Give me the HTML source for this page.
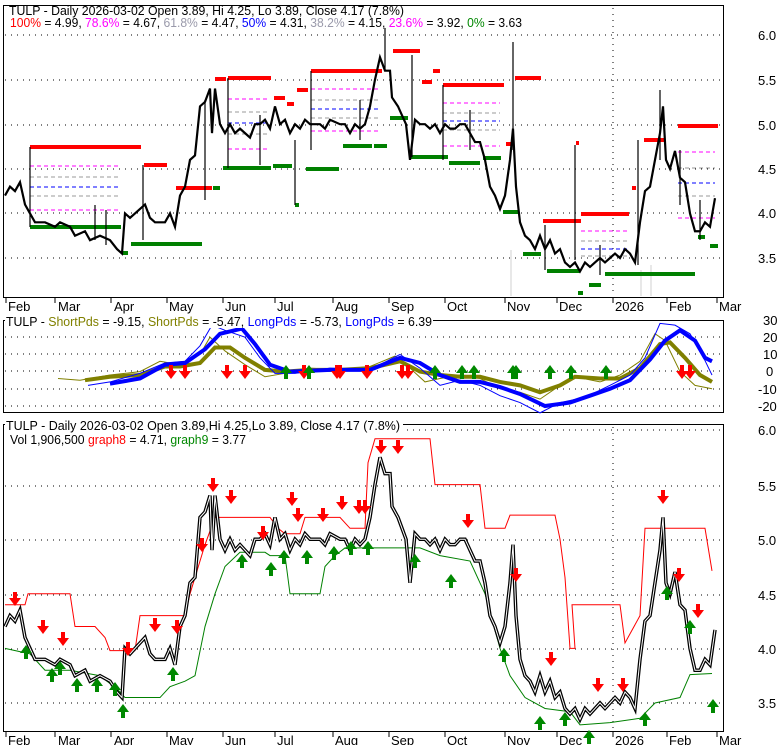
<!DOCTYPE html><html><head><style>
body{margin:0;background:#fff;width:780px;height:745px;overflow:hidden}
svg{display:block;font-family:"Liberation Sans",sans-serif}
.l{font-size:13px}
</style></head><body>
<svg width="780" height="745" viewBox="0 0 780 745">
<defs>
<polyline id="pr" fill="none" vector-effect="non-scaling-stroke" points="5,4.2 10,4.3 15,4.25 20,4.35 25,4.1 30,4.0 35,3.9 45,3.9 55,3.85 60,3.9 70,3.85 75,3.75 85,3.8 90,3.7 100,3.75 110,3.7 117,3.6 122,3.55 125,4.0 130,3.95 135,4.0 145,4.1 150,3.95 155,3.9 165,3.9 170,4.0 175,3.85 180,4.2 185,4.3 190,4.6 195,4.65 200,5.2 205,5.25 210,5.4 212,4.9 215,5.4 220,5.0 225,4.9 230,5.0 235,4.9 240,4.95 245,4.9 250,4.85 255,5.0 260,5.0 265,5.05 270,4.95 275,5.2 280,5.0 285,5.05 290,4.9 295,5.0 300,4.95 305,5.05 310,5.0 320,5.0 325,4.95 330,5.05 340,5.0 345,5.0 350,4.9 355,5.0 360,4.95 365,5.0 370,5.2 375,5.5 380,5.75 385,5.6 390,5.6 392,5.3 398,5.2 402,5.1 406,5.0 410,4.6 415,5.05 420,5.0 425,5.0 430,4.95 435,5.0 440,4.9 445,5.0 450,4.95 455,4.95 460,5.0 465,5.0 470,4.9 475,4.8 480,4.8 485,4.6 490,4.3 495,4.2 500,4.05 505,4.2 510,4.6 513,4.95 516,4.3 520,3.9 525,3.75 530,3.7 535,3.6 540,3.75 545,3.6 550,3.7 555,3.55 560,3.6 565,3.45 570,3.4 575,3.45 580,3.35 585,3.45 590,3.4 595,3.45 600,3.5 605,3.45 610,3.5 615,3.55 620,3.5 625,3.6 630,3.55 635,3.45 640,3.9 645,4.25 650,4.3 655,4.6 660,4.9 663,5.2 666,4.6 670,4.5 675,4.7 680,4.4 685,4.35 690,4.0 695,3.8 700,3.8 705,3.9 710,3.85 715,4.17"/>
</defs>

<!-- PANEL 1 -->
<rect x="3.5" y="5.5" width="720" height="292" fill="none" stroke="#000"/>
<g stroke="#000" stroke-dasharray="1,5">
<line x1="5" y1="35" x2="722" y2="35"/><line x1="5" y1="80" x2="722" y2="80"/><line x1="5" y1="125" x2="722" y2="125"/><line x1="5" y1="169" x2="722" y2="169"/><line x1="5" y1="213" x2="722" y2="213"/><line x1="5" y1="258" x2="722" y2="258"/>
<line x1="613" y1="8" x2="613" y2="296"/>
</g>
<g fill="#e8e8e8"><rect x="510" y="250" width="2" height="46"/><rect x="640" y="270" width="2" height="26"/><rect x="650" y="265" width="2" height="31"/></g>
<g stroke="#ff0000" stroke-width="4">
<line x1="30" y1="147" x2="141" y2="147"/><line x1="144" y1="165" x2="167" y2="165"/><line x1="176" y1="188" x2="212" y2="188"/><line x1="215" y1="79" x2="226" y2="79"/><line x1="228" y1="78" x2="271" y2="78"/><line x1="274" y1="98" x2="285" y2="98"/><line x1="287" y1="104" x2="294" y2="104"/><line x1="297" y1="90" x2="308" y2="90"/><line x1="311" y1="71" x2="382" y2="71"/><line x1="393" y1="51" x2="420" y2="51"/><line x1="422" y1="82" x2="432" y2="82"/><line x1="433" y1="71" x2="440" y2="71"/><line x1="443" y1="85" x2="504" y2="85"/><line x1="515" y1="78" x2="541" y2="78"/><line x1="543" y1="221" x2="581" y2="221"/><line x1="576" y1="143" x2="579" y2="143"/><line x1="581" y1="214" x2="629" y2="214"/><line x1="632" y1="188" x2="636" y2="188"/><line x1="644" y1="140" x2="664" y2="140"/><line x1="678" y1="126" x2="718" y2="126"/><line x1="506" y1="144" x2="511" y2="144"/>
</g>
<g stroke="#008000" stroke-width="4">
<line x1="30" y1="227" x2="121" y2="227"/><line x1="123" y1="253" x2="128" y2="253"/><line x1="131" y1="244" x2="202" y2="244"/><line x1="213" y1="188" x2="220" y2="188"/><line x1="223" y1="168" x2="271" y2="168"/><line x1="273" y1="166" x2="292" y2="166"/><line x1="295" y1="205" x2="299" y2="205"/><line x1="306" y1="169" x2="339" y2="169"/><line x1="343" y1="146" x2="372" y2="146"/><line x1="374" y1="146" x2="387" y2="146"/><line x1="390" y1="118" x2="408" y2="118"/><line x1="411" y1="157" x2="448" y2="157"/><line x1="449" y1="163" x2="480" y2="163"/><line x1="483" y1="158" x2="501" y2="158"/><line x1="503" y1="212" x2="518" y2="212"/><line x1="523" y1="254" x2="541" y2="254"/><line x1="547" y1="271" x2="580" y2="271"/><line x1="578" y1="293" x2="583" y2="293"/><line x1="589" y1="285" x2="601" y2="285"/><line x1="605" y1="274" x2="695" y2="274"/><line x1="698" y1="237" x2="705" y2="237"/><line x1="710" y1="246" x2="718" y2="246"/>
</g>
<g stroke-width="1" stroke-dasharray="4,3">
<line x1="30" y1="166" x2="120" y2="166" stroke="#f0f"/><line x1="30" y1="177" x2="120" y2="177" stroke="#999"/><line x1="30" y1="187" x2="120" y2="187" stroke="#00f"/><line x1="30" y1="196" x2="120" y2="196" stroke="#999"/><line x1="30" y1="210" x2="120" y2="210" stroke="#f0f"/>
<line x1="228" y1="99" x2="270" y2="99" stroke="#f0f"/><line x1="228" y1="112" x2="270" y2="112" stroke="#999"/><line x1="228" y1="123" x2="270" y2="123" stroke="#00f"/><line x1="228" y1="134" x2="270" y2="134" stroke="#999"/><line x1="228" y1="149" x2="270" y2="149" stroke="#f0f"/>
<line x1="311" y1="89" x2="380" y2="89" stroke="#f0f"/><line x1="311" y1="100" x2="380" y2="100" stroke="#999"/><line x1="311" y1="109" x2="380" y2="109" stroke="#00f"/><line x1="311" y1="118" x2="380" y2="118" stroke="#999"/><line x1="311" y1="131" x2="380" y2="131" stroke="#f0f"/>
<line x1="443" y1="103" x2="500" y2="103" stroke="#f0f"/><line x1="443" y1="113" x2="500" y2="113" stroke="#999"/><line x1="443" y1="121" x2="500" y2="121" stroke="#00f"/><line x1="443" y1="130" x2="500" y2="130" stroke="#999"/><line x1="443" y1="146" x2="500" y2="146" stroke="#f0f"/>
<line x1="581" y1="231" x2="628" y2="231" stroke="#f0f"/><line x1="581" y1="241" x2="628" y2="241" stroke="#999"/><line x1="581" y1="249" x2="628" y2="249" stroke="#00f"/><line x1="581" y1="256" x2="628" y2="256" stroke="#999"/>
<line x1="678" y1="152" x2="715" y2="152" stroke="#f0f"/><line x1="678" y1="168" x2="715" y2="168" stroke="#999"/><line x1="678" y1="183" x2="715" y2="183" stroke="#00f"/><line x1="678" y1="196" x2="715" y2="196" stroke="#999"/><line x1="678" y1="218" x2="715" y2="218" stroke="#f0f"/>
</g>
<use href="#pr" stroke="#000" stroke-width="2.2" transform="translate(0,35) scale(1,-89.2) translate(0,-6)"/>
<g stroke="#000" stroke-width="1.2">
<line x1="385" y1="28" x2="385" y2="70"/><line x1="513" y1="42" x2="513" y2="150"/><line x1="575" y1="145" x2="575" y2="260"/><line x1="295" y1="140" x2="295" y2="205"/><line x1="30" y1="147" x2="30" y2="227"/><line x1="143" y1="165" x2="143" y2="240"/><line x1="228" y1="78" x2="228" y2="168"/><line x1="311" y1="71" x2="311" y2="150"/><line x1="443" y1="85" x2="443" y2="160"/><line x1="412" y1="55" x2="412" y2="157"/><line x1="660" y1="90" x2="660" y2="160"/><line x1="638" y1="140" x2="638" y2="265"/><line x1="106" y1="210" x2="106" y2="245"/><line x1="95" y1="205" x2="95" y2="240"/><line x1="205" y1="100" x2="205" y2="200"/><line x1="260" y1="115" x2="260" y2="165"/><line x1="360" y1="100" x2="360" y2="140"/><line x1="470" y1="110" x2="470" y2="150"/><line x1="545" y1="225" x2="545" y2="270"/><line x1="600" y1="245" x2="600" y2="275"/><line x1="680" y1="150" x2="680" y2="205"/><line x1="700" y1="200" x2="700" y2="240"/></g>
<text x="9" y="15" class="l" fill="#000" textLength="395" lengthAdjust="spacingAndGlyphs">TULP - Daily 2026-03-02 Open 3.89, Hi 4.25, Lo 3.89, Close 4.17 (7.8%)</text>
<text x="10" y="27" class="l" textLength="512" lengthAdjust="spacingAndGlyphs"><tspan fill="#f00">100%</tspan> = 4.99, <tspan fill="#f0f">78.6%</tspan> = 4.67, <tspan fill="#99a">61.8%</tspan> = 4.47, <tspan fill="#00f">50%</tspan> = 4.31, <tspan fill="#99a">38.2%</tspan> = 4.15, <tspan fill="#f0f">23.6%</tspan> = 3.92, <tspan fill="#080">0%</tspan> = 3.63</text>
<g class="l" fill="#000"><text x="758" y="40">6.0</text><text x="758" y="85">5.5</text><text x="758" y="130">5.0</text><text x="758" y="174">4.5</text><text x="758" y="218">4.0</text><text x="758" y="263">3.5</text></g>
<g stroke="#000"><line x1="6" y1="298" x2="6" y2="303"/><line x1="55" y1="298" x2="55" y2="303"/><line x1="111" y1="298" x2="111" y2="303"/><line x1="167" y1="298" x2="167" y2="303"/><line x1="223" y1="298" x2="223" y2="303"/><line x1="275" y1="298" x2="275" y2="303"/><line x1="333" y1="298" x2="333" y2="303"/><line x1="389" y1="298" x2="389" y2="303"/><line x1="445" y1="298" x2="445" y2="303"/><line x1="505" y1="298" x2="505" y2="303"/><line x1="557" y1="298" x2="557" y2="303"/><line x1="613" y1="298" x2="613" y2="303"/><line x1="667" y1="298" x2="667" y2="303"/><line x1="717" y1="298" x2="717" y2="303"/></g>
<g class="l" fill="#000"><text x="8" y="311">Feb</text><text x="58" y="311">Mar</text><text x="114" y="311">Apr</text><text x="169" y="311">May</text><text x="225" y="311">Jun</text><text x="277" y="311">Jul</text><text x="335" y="311">Aug</text><text x="391" y="311">Sep</text><text x="447" y="311">Oct</text><text x="507" y="311">Nov</text><text x="559" y="311">Dec</text><text x="615" y="311">2026</text><text x="669" y="311">Feb</text><text x="719" y="311">Mar</text></g>

<!-- PANEL 2 -->
<rect x="3.5" y="320.5" width="720" height="92" fill="none" stroke="#000"/>
<g stroke="#000" stroke-dasharray="1,5">
<line x1="5" y1="337" x2="722" y2="337"/><line x1="5" y1="354" x2="722" y2="354"/><line x1="5" y1="371" x2="722" y2="371"/><line x1="5" y1="389" x2="722" y2="389"/><line x1="5" y1="406" x2="722" y2="406"/>
</g>
<g transform="translate(0,371.6) scale(1,-1.72)" fill="none">
<polyline vector-effect="non-scaling-stroke" stroke="#808000" stroke-width="1" points="58,-4 80,-5 110,-2 140,0 160,6 180,4 200,10 210,20 225,12 245,4 265,-3 285,-1 310,2 340,1 370,3 395,9 410,2 425,-6 440,-4 460,-2 480,-4 500,-10 520,-12 540,-16 555,-10 575,-3 600,-6 620,-2 640,6 655,22 665,18 680,0 695,-8 712,-10"/>
<polyline vector-effect="non-scaling-stroke" stroke="#808000" stroke-width="4" points="85,-5 110,-3 140,-2 165,3 180,3 200,5 215,14 230,14 245,8 265,1 285,0 310,1 340,1 370,2 400,6 420,0 440,-2 460,-3 480,-3 500,-6 520,-8 540,-12 560,-8 575,-3 600,-4 620,-4 640,2 660,16 670,17 685,8 700,-2 712,-6"/>
<polyline vector-effect="non-scaling-stroke" stroke="#0000ff" stroke-width="1" points="88,-8 110,-6 140,-1 165,5 185,6 200,15 212,27 225,24 245,20 260,8 275,-1 295,-1 330,2 370,1 400,10 420,2 440,-8 460,-5 480,-8 500,-14 520,-18 540,-24 560,-18 585,-15 610,-8 630,-2 645,8 660,28 675,27 690,22 702,10 712,-2"/>
<polyline vector-effect="non-scaling-stroke" stroke="#0000ff" stroke-width="4" points="110,-7 140,-4 165,4 185,5 205,13 220,22 242,25 255,16 270,4 290,0 330,1 370,1 400,8 420,5 440,-2 460,-6 480,-6 500,-9 520,-13 545,-20 570,-18 590,-14 610,-10 630,-5 650,7 665,18 680,24 695,18 705,8 712,6"/>
</g>
<g fill="#f00">
<path d="M169,365h4v6h4l-6,8l-6,-8h4z"/><path d="M183,365h4v6h4l-6,8l-6,-8h4z"/><path d="M225,365h4v6h4l-6,8l-6,-8h4z"/><path d="M243,365h4v6h4l-6,8l-6,-8h4z"/><path d="M335,365h4v6h4l-6,8l-6,-8h4z"/><path d="M338,365h4v6h4l-6,8l-6,-8h4z"/><path d="M365,365h4v6h4l-6,8l-6,-8h4z"/><path d="M400,365h4v6h4l-6,8l-6,-8h4z"/><path d="M406,365h4v6h4l-6,8l-6,-8h4z"/><path d="M302,365h4v6h4l-6,8l-6,-8h4z"/><path d="M680,365h4v6h4l-6,8l-6,-8h4z"/><path d="M688,365h4v6h4l-6,8l-6,-8h4z"/>
</g>
<g fill="#080">
<path d="M284,379h4v-6h4l-6,-8l-6,8h4z"/><path d="M307,379h4v-6h4l-6,-8l-6,8h4z"/><path d="M433,379h4v-6h4l-6,-8l-6,8h4z"/><path d="M460,379h4v-6h4l-6,-8l-6,8h4z"/><path d="M472,379h4v-6h4l-6,-8l-6,8h4z"/><path d="M511,379h4v-6h4l-6,-8l-6,8h4z"/><path d="M514,379h4v-6h4l-6,-8l-6,8h4z"/><path d="M548,379h4v-6h4l-6,-8l-6,8h4z"/><path d="M569,379h4v-6h4l-6,-8l-6,8h4z"/><path d="M604,379h4v-6h4l-6,-8l-6,8h4z"/>
</g>
<rect x="5" y="314" width="428" height="14" fill="#fff"/>
<text x="6" y="326" class="l" textLength="426" lengthAdjust="spacingAndGlyphs">TULP - <tspan fill="#808000">ShortPds</tspan> = -9.15, <tspan fill="#808000">ShortPds</tspan> = -5.47, <tspan fill="#00f">LongPds</tspan> = -5.73, <tspan fill="#00f">LongPds</tspan> = 6.39</text>
<g class="l" fill="#000"><text x="763" y="325">30</text><text x="763" y="342">20</text><text x="763" y="359">10</text><text x="766" y="376">0</text><text x="758" y="394">-10</text><text x="758" y="411">-20</text></g>

<!-- PANEL 3 -->
<rect x="3.5" y="424.5" width="720" height="307" fill="none" stroke="#000"/>
<g stroke="#000" stroke-dasharray="1,5">
<line x1="5" y1="430" x2="722" y2="430"/><line x1="5" y1="486" x2="722" y2="486"/><line x1="5" y1="540" x2="722" y2="540"/><line x1="5" y1="595" x2="722" y2="595"/><line x1="5" y1="649" x2="722" y2="649"/><line x1="5" y1="703" x2="722" y2="703"/>
<line x1="613" y1="427" x2="613" y2="730"/>
</g>
<g transform="translate(0,430) scale(1,-109.2) translate(0,-6)" fill="none">
<polyline vector-effect="non-scaling-stroke" stroke="#f00" stroke-width="1" points="5,4.4 25,4.4 28,4.5 70,4.5 75,4.2 95,4.2 105,4.1 110,3.98 135,3.98 140,4.3 185,4.3 190,4.5 205,4.95 215,5.2 270,5.2 278,5.1 285,5.05 300,5.05 305,5.2 340,5.2 350,5.1 365,5.1 368,5.7 375,5.92 430,5.92 435,5.5 480,5.5 485,5.1 505,5.1 510,5.22 555,5.22 560,5.0 565,4.65 570,4.0 575,4.0 572,4.4 620,4.4 625,4.05 640,4.3 645,5.1 705,5.1 712,4.71"/>
<polyline vector-effect="non-scaling-stroke" stroke="#008000" stroke-width="1" points="5,4.0 30,3.95 45,3.8 70,3.8 100,3.75 118,3.62 125,3.55 160,3.55 170,3.65 185,3.7 195,3.75 205,4.2 215,4.5 225,4.75 240,4.88 265,4.88 270,4.85 285,4.85 290,4.5 320,4.5 325,4.75 335,4.85 345,4.92 420,4.92 440,4.85 470,4.8 485,4.5 500,4.0 510,3.75 525,3.55 545,3.45 570,3.42 580,3.3 610,3.32 640,3.36 655,3.5 680,3.55 690,3.76 712,3.77"/>
</g>
<g transform="translate(0,430) scale(1,-109.2) translate(0,-6)">
<use href="#pr" stroke="#000" stroke-width="3.5"/>
<use href="#pr" stroke="#fff" stroke-width="1"/>
</g>
<g fill="#f00">
<path d="M13,592h4v6h4l-6,8l-6,-8h4z"/><path d="M41,620h4v6h4l-6,8l-6,-8h4z"/><path d="M61,632h4v6h4l-6,8l-6,-8h4z"/><path d="M126,642h4v6h4l-6,8l-6,-8h4z"/><path d="M153,618h4v6h4l-6,8l-6,-8h4z"/><path d="M175,620h4v6h4l-6,8l-6,-8h4z"/><path d="M200,538h4v6h4l-6,8l-6,-8h4z"/><path d="M211,478h4v6h4l-6,8l-6,-8h4z"/><path d="M229,490h4v6h4l-6,8l-6,-8h4z"/><path d="M261,526h4v6h4l-6,8l-6,-8h4z"/><path d="M290,492h4v6h4l-6,8l-6,-8h4z"/><path d="M296,508h4v6h4l-6,8l-6,-8h4z"/><path d="M321,508h4v6h4l-6,8l-6,-8h4z"/><path d="M340,496h4v6h4l-6,8l-6,-8h4z"/><path d="M357,500h4v6h4l-6,8l-6,-8h4z"/><path d="M363,500h4v6h4l-6,8l-6,-8h4z"/><path d="M379,440h4v6h4l-6,8l-6,-8h4z"/><path d="M396,440h4v6h4l-6,8l-6,-8h4z"/><path d="M466,514h4v6h4l-6,8l-6,-8h4z"/><path d="M514,568h4v6h4l-6,8l-6,-8h4z"/><path d="M549,652h4v6h4l-6,8l-6,-8h4z"/><path d="M596,678h4v6h4l-6,8l-6,-8h4z"/><path d="M621,678h4v6h4l-6,8l-6,-8h4z"/><path d="M661,490h4v6h4l-6,8l-6,-8h4z"/><path d="M677,568h4v6h4l-6,8l-6,-8h4z"/><path d="M696,604h4v6h4l-6,8l-6,-8h4z"/>
</g>
<g fill="#080">
<path d="M24,659h4v-6h4l-6,-8l-6,8h4z"/><path d="M50,682h4v-6h4l-6,-8l-6,8h4z"/><path d="M58,675h4v-6h4l-6,-8l-6,8h4z"/><path d="M75,692h4v-6h4l-6,-8l-6,8h4z"/><path d="M95,692h4v-6h4l-6,-8l-6,8h4z"/><path d="M113,696h4v-6h4l-6,-8l-6,8h4z"/><path d="M121,718h4v-6h4l-6,-8l-6,8h4z"/><path d="M171,681h4v-6h4l-6,-8l-6,8h4z"/><path d="M240,568h4v-6h4l-6,-8l-6,8h4z"/><path d="M269,576h4v-6h4l-6,-8l-6,8h4z"/><path d="M282,564h4v-6h4l-6,-8l-6,8h4z"/><path d="M305,564h4v-6h4l-6,-8l-6,8h4z"/><path d="M332,560h4v-6h4l-6,-8l-6,8h4z"/><path d="M349,555h4v-6h4l-6,-8l-6,8h4z"/><path d="M366,555h4v-6h4l-6,-8l-6,8h4z"/><path d="M413,568h4v-6h4l-6,-8l-6,8h4z"/><path d="M449,588h4v-6h4l-6,-8l-6,8h4z"/><path d="M502,662h4v-6h4l-6,-8l-6,8h4z"/><path d="M538,730h4v-6h4l-6,-8l-6,8h4z"/><path d="M563,726h4v-6h4l-6,-8l-6,8h4z"/><path d="M587,744h4v-6h4l-6,-8l-6,8h4z"/><path d="M643,726h4v-6h4l-6,-8l-6,8h4z"/><path d="M665,600h4v-6h4l-6,-8l-6,8h4z"/><path d="M688,634h4v-6h4l-6,-8l-6,8h4z"/><path d="M711,713h4v-6h4l-6,-8l-6,8h4z"/>
</g>
<rect x="5" y="418" width="398" height="14" fill="#fff"/>
<text x="6" y="430" class="l" textLength="394" lengthAdjust="spacingAndGlyphs">TULP - Daily 2026-03-02 Open 3.89,Hi 4.25,Lo 3.89, Close 4.17 (7.8%)</text>
<text x="10" y="444" class="l" textLength="236" lengthAdjust="spacingAndGlyphs">Vol 1,906,500 <tspan fill="#f00">graph8</tspan> = 4.71, <tspan fill="#080">graph9</tspan> = 3.77</text>
<g class="l" fill="#000"><text x="758" y="435">6.0</text><text x="758" y="491">5.5</text><text x="758" y="545">5.0</text><text x="758" y="600">4.5</text><text x="758" y="654">4.0</text><text x="758" y="708">3.5</text></g>
<g stroke="#000"><line x1="6" y1="732" x2="6" y2="737"/><line x1="55" y1="732" x2="55" y2="737"/><line x1="111" y1="732" x2="111" y2="737"/><line x1="167" y1="732" x2="167" y2="737"/><line x1="223" y1="732" x2="223" y2="737"/><line x1="275" y1="732" x2="275" y2="737"/><line x1="333" y1="732" x2="333" y2="737"/><line x1="389" y1="732" x2="389" y2="737"/><line x1="445" y1="732" x2="445" y2="737"/><line x1="505" y1="732" x2="505" y2="737"/><line x1="557" y1="732" x2="557" y2="737"/><line x1="613" y1="732" x2="613" y2="737"/><line x1="667" y1="732" x2="667" y2="737"/><line x1="717" y1="732" x2="717" y2="737"/></g>
<g class="l" fill="#000"><text x="8" y="745">Feb</text><text x="58" y="745">Mar</text><text x="114" y="745">Apr</text><text x="169" y="745">May</text><text x="225" y="745">Jun</text><text x="277" y="745">Jul</text><text x="335" y="745">Aug</text><text x="391" y="745">Sep</text><text x="447" y="745">Oct</text><text x="507" y="745">Nov</text><text x="559" y="745">Dec</text><text x="615" y="745">2026</text><text x="669" y="745">Feb</text><text x="719" y="745">Mar</text></g>
</svg>
</body></html>
